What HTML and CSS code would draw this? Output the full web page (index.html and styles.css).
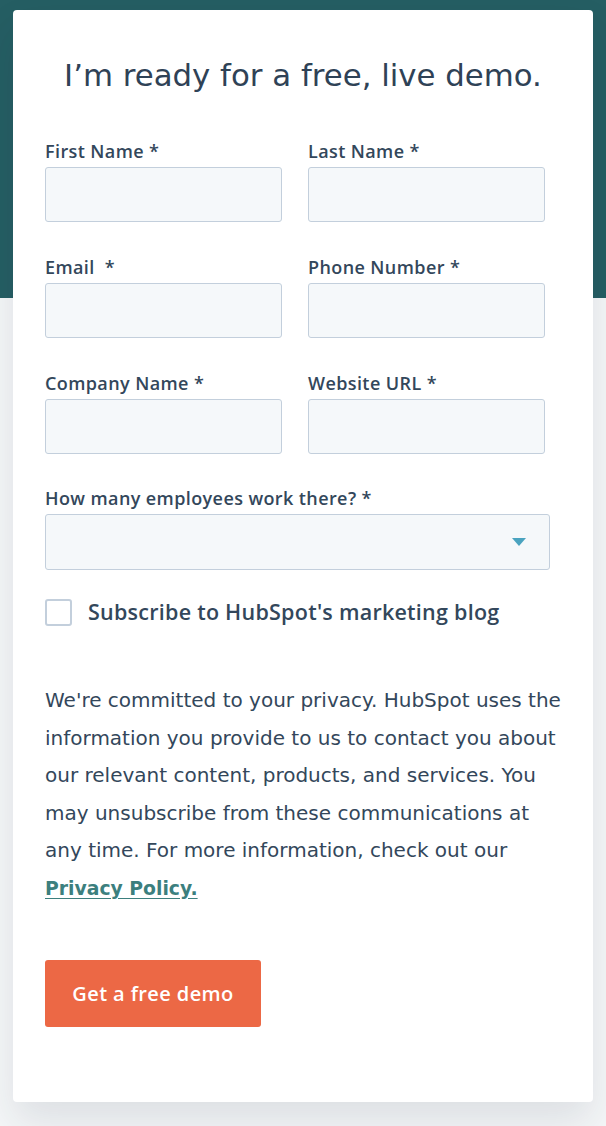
FILE: index.html
```html
<!DOCTYPE html>
<html lang="en">
<head>
<meta charset="utf-8">
<title>Demo form</title>
<link rel="stylesheet" href="styles.css">
</head>
<body>
<main class="card">
  <h1 class="title">I’m ready for a free, live demo.</h1>
  <form class="form">
    <div class="grid">
      <div class="field">
        <label class="label">First Name *</label>
        <input class="input" type="text">
      </div>
      <div class="field">
        <label class="label">Last Name *</label>
        <input class="input" type="text">
      </div>
      <div class="field">
        <label class="label">Email&nbsp; *</label>
        <input class="input" type="email">
      </div>
      <div class="field">
        <label class="label">Phone Number *</label>
        <input class="input" type="tel">
      </div>
      <div class="field">
        <label class="label">Company Name *</label>
        <input class="input" type="text">
      </div>
      <div class="field">
        <label class="label">Website URL *</label>
        <input class="input" type="text">
      </div>
    </div>
    <div class="field field-wide">
      <label class="label">How many employees work there? *</label>
      <div class="select">
        <svg class="caret" width="14" height="8" viewBox="0 0 14 8"><path d="M0 0h14L7 8z" fill="#4aa3bf"/></svg>
      </div>
    </div>
    <label class="check">
      <span class="box"></span>
      <span class="check-text">Subscribe to HubSpot's marketing blog</span>
    </label>
    <p class="privacy">We're committed to your privacy. HubSpot uses the<br>information you provide to us to contact you about<br>our relevant content, products, and services. You<br>may unsubscribe from these communications at<br>any time. For more information, check out our<br><a class="link" href="#">Privacy Policy.</a></p>
    <button class="btn" type="button">Get a free demo</button>
  </form>
</main>
</body>
</html>
```
FILE: styles.css
```css
* { box-sizing: border-box; }
html, body { margin: 0; padding: 0; }
body {
  width: 606px;
  min-height: 1126px;
  background: linear-gradient(#255e63 0, #255e63 298px, #f5f7f8 298px);
  font-family: "DejaVu Sans", sans-serif;
  color: #33475b;
  padding-top: 10px;
}
.card {
  margin-left: 13px;
  width: 580px;
  background: #fff;
  border-radius: 4px;
  padding: 45px 32px 75px;
  box-shadow: 0 20px 40px rgba(30, 40, 60, 0.11);
}
.title {
  margin: 0;
  text-align: center;
  font-weight: 400;
  font-size: 30.8px;
  line-height: 40px;
  color: #2f4256;
  white-space: nowrap;
}
.form { margin-top: 46px; }
.grid {
  display: grid;
  grid-template-columns: 237px 237px;
  column-gap: 26px;
  row-gap: 35px;
}
.field { display: flex; flex-direction: column; gap: 6px; }
.field-wide { margin-top: 34px; }
.label {
  font-family: "Open Sans", sans-serif;
  font-weight: 600;
  font-size: 18px;
  letter-spacing: 0.4px;
  line-height: 20px;
  color: #33475b;
}
.input {
  height: 55px;
  width: 237px;
  background: #f5f8fa;
  border: 1px solid #c3cfdc;
  border-radius: 3px;
  margin: 0;
}
.select {
  height: 56px;
  width: 505px;
  background: #f5f8fa;
  border: 1px solid #c3cfdc;
  border-radius: 3px;
  display: flex;
  align-items: center;
  justify-content: flex-end;
  padding-right: 23px;
}
.caret { display: block; }
.check {
  display: flex;
  align-items: center;
  gap: 16px;
  margin-top: 28px;
}
.box {
  width: 27px;
  height: 27px;
  border: 2px solid #c3cfdc;
  border-radius: 3px;
  background: #fff;
}
.check-text {
  font-family: "Open Sans", sans-serif;
  font-weight: 600;
  font-size: 21.5px;
  letter-spacing: 0.25px;
  line-height: 28px;
}
.privacy {
  margin: 56px 0 0;
  font-size: 20px;
  line-height: 37.6px;
  color: #33475b;
  white-space: nowrap;
}
.link {
  color: #3c7f7e;
  font-weight: 700;
  font-size: 18.8px;
  text-decoration: underline;
  text-underline-offset: 3px;
}
.btn {
  display: block;
  margin-top: 52px;
  width: 216px;
  height: 67px;
  border: none;
  border-radius: 3px;
  background: #ec6845;
  color: #fff;
  font-family: "Open Sans", sans-serif;
  font-weight: 600;
  font-size: 20px;
  letter-spacing: 0.4px;
  cursor: pointer;
}
```
